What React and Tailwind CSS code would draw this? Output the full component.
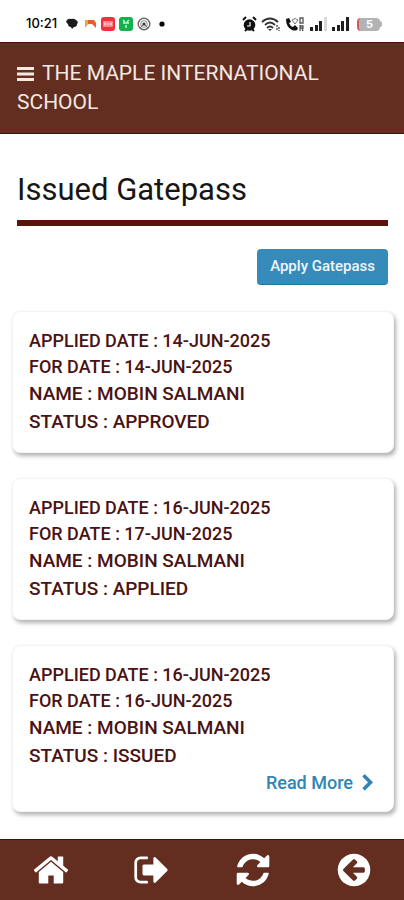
const passes = [
  { id: 1, applied: '14-JUN-2025', forDate: '14-JUN-2025', name: 'MOBIN SALMANI', status: 'APPROVED' },
  { id: 2, applied: '16-JUN-2025', forDate: '17-JUN-2025', name: 'MOBIN SALMANI', status: 'APPLIED' },
  { id: 3, applied: '16-JUN-2025', forDate: '16-JUN-2025', name: 'MOBIN SALMANI', status: 'ISSUED', more: true },
];

const navItems = [
  {
    label: 'Home',
    path: 'M1472 992v480q0 26-19 45t-45 19h-384v-384h-256v384h-384q-26 0-45-19t-19-45v-480q0-1 .5-3t.5-3l575-474 575 474q1 2 1 6zm223-69l-62 74q-8 9-21 11h-3q-13 0-21-7l-692-577-692 577q-12 8-24 7-13-2-21-11l-62-74q-8-10-7-23.5t11-21.5l719-599q32-26 76-26t76 26l244 204v-195q0-14 9-23t23-9h192q14 0 23 9t9 23v408l219 182q10 8 11 21.5t-7 23.5z',
  },
  {
    label: 'Sign out',
    path: 'M704 1440q0 4 1 20t.5 26.5-3 23.5-10 19.5-20.5 6.5h-320q-119 0-203.5-84.5t-84.5-203.5v-704q0-119 84.5-203.5t203.5-84.5h320q13 0 22.5 9.5t9.5 22.5q0 4 1 20t.5 26.5-3 23.5-10 19.5-20.5 6.5h-320q-66 0-113 47t-47 113v704q0 66 47 113t113 47h312l11.5 1 11.5 3 8 5.5 7 9 2 13.5zm928-544q0 26-19 45l-544 544q-19 19-45 19t-45-19-19-45v-288h-448q-26 0-45-19t-19-45v-384q0-26 19-45t45-19h448v-288q0-26 19-45t45-19 45 19l544 544q19 19 19 45z',
  },
  {
    label: 'Refresh',
    path: 'M1639 1056q0 5-1 7-64 268-268 434.5t-478 166.5q-146 0-282.5-55t-243.5-157l-129 129q-19 19-45 19t-45-19-19-45v-448q0-26 19-45t45-19h448q26 0 45 19t19 45-19 45l-137 137q71 66 161 102t187 36q134 0 250-65t186-179q11-17 53-117 8-23 30-23h192q13 0 22.5 9.5t9.5 22.5zm25-800v448q0 26-19 45t-45 19h-448q-26 0-45-19t-19-45 19-45l138-138q-148-137-349-137-134 0-250 65t-186 179q-11 17-53 117-8 23-30 23h-199q-13 0-22.5-9.5t-9.5-22.5v-7q65-268 270-434.5t480-166.5q146 0 284 55.5t245 156.5l130-129q19-19 45-19t45 19 19 45z',
  },
  {
    label: 'Back',
    path: 'M1408 960v-128q0-26-19-45t-45-19h-502l189-189q19-19 19-45t-19-45l-91-91q-18-18-45-18t-45 18l-362 362-91 91q-18 18-18 45t18 45l91 91 362 362q18 18 45 18t45-18l91-91q18-18 18-45t-18-45l-189-189h502q26 0 45-19t19-45zm256-64q0 209-103 385.5t-279.5 279.5-385.5 103-385.5-103-279.5-279.5-103-385.5 103-385.5 279.5-279.5 385.5-103 385.5 103 279.5 279.5 103 385.5z',
  },
];

function Icon({ path, className }) {
  return (
    <svg viewBox="0 0 1792 1792" fill="currentColor" className={className} aria-hidden="true">
      <path d={path} />
    </svg>
  );
}

function SignalBars({ weak }) {
  return (
    <svg viewBox="0 0 18 16" className="w-[18px] h-4" aria-hidden="true">
      <path d="M1 11h3v4H1zM6 9h3v6H6zM10 5h3v10h-3z" fill="#1f1f1f" />
      <path d="M15 1h3v14h-3z" fill={weak ? '#d9d9d9' : '#1f1f1f'} />
    </svg>
  );
}

function StatusBar() {
  return (
    <div className="flex h-[42px] items-center justify-between bg-white pt-1.5 pl-[26px] pr-[22px] text-black">
      <div className="flex items-center gap-1">
        <span className="mr-1 font-[Inter] text-[13px] font-medium">10:21</span>
        <svg viewBox="0 0 14 14" className="size-[14px]" aria-hidden="true">
          <path d="M2 3q2-2 4-1 3-1 5 1 3 2 1 4 0 3-3 3l-2 2-1-2Q3 10 3 7 0 5 2 3z" fill="#1c1c1c" />
        </svg>
        <svg viewBox="0 0 14 14" className="size-[14px]" aria-hidden="true">
          <path d="M2 3h4v3L2 11z" fill="#f9a13c" />
          <path d="M5 3h6l2 3v5L9 7H5z" fill="#ee5a2d" />
        </svg>
        <svg viewBox="0 0 14 14" className="size-[14px]" aria-hidden="true">
          <rect width="14" height="14" rx="3" fill="#f3313d" />
          <rect x="2" y="4" width="10" height="6" rx="1" fill="#f98c90" />
          <path d="M3 7h8" stroke="#fff" strokeWidth="1" strokeDasharray="2 1" />
        </svg>
        <svg viewBox="0 0 14 14" className="size-[14px]" aria-hidden="true">
          <rect width="14" height="14" rx="3" fill="#14b04e" />
          <path d="M4 3l2 2M10 3L8 5M4 6h6M7 8v3" stroke="#c8f3d6" strokeWidth="1.4" />
        </svg>
        <svg viewBox="0 0 14 14" className="size-[14px]" fill="none" stroke="#666" aria-hidden="true">
          <circle cx="7" cy="7" r="5.8" strokeWidth="1.4" />
          <circle cx="7" cy="7" r="3.3" stroke="#888" />
          <circle cx="7" cy="7" r="1.6" fill="#333" stroke="none" />
          <path d="M3 11l3-3M11 11L8 8" />
        </svg>
        <svg viewBox="0 0 14 14" className="size-[14px]" aria-hidden="true">
          <circle cx="7" cy="7" r="2.6" fill="#000" />
        </svg>
      </div>
      <div className="flex items-center gap-1">
        <svg viewBox="0 0 15 16" className="w-[15px] h-4" aria-hidden="true">
          <circle cx="7.5" cy="9" r="5.8" fill="#111" />
          <path d="M1 4l3-3M14 4l-3-3M3 15l2-2M12 15l-2-2" stroke="#111" strokeWidth="2" />
          <path d="M8 6v4H5" stroke="#fff" strokeWidth="1.2" fill="none" />
        </svg>
        <svg viewBox="0 0 20 16" className="w-5 h-4" fill="none" stroke="#333" aria-hidden="true">
          <path d="M1 6q8-7 16 0M4 9q5-5 10 0M6 12q3-3 6 0" strokeWidth="1.8" />
          <path d="M9 15l-2-2h4z" fill="#333" stroke="none" />
          <path d="M16 9v5M18 11v4" strokeWidth="1.2" strokeDasharray="2 1" />
        </svg>
        <svg viewBox="0 0 20 16" className="w-5 h-4" fill="none" aria-hidden="true">
          <path d="M1 3l3-1 2 4-2 1q1 3 4 4l2-2 3 3-1 2q-2 1-5 0Q1 11 1 3z" fill="#111" />
          <path d="M7 4q3-3 6 0l-3 4z" stroke="#777" />
          <path d="M15 2h3v5h-3zM15 9v6M15 10h3v2h-3M17 12l1 3" stroke="#555" strokeWidth="1.3" />
        </svg>
        <SignalBars weak />
        <SignalBars />
        <div className="ml-1 flex items-center">
          <div className="flex h-[13px] w-[23px] items-center justify-center rounded-sm border-l-2 border-[#d6575c] bg-[#b3b3b3] font-[Inter] text-[11px] leading-none font-bold text-white">
            5
          </div>
          <div className="h-1.5 w-0.5 rounded-r bg-[#b3b3b3]" />
        </div>
      </div>
    </div>
  );
}

function PassCard({ pass }) {
  return (
    <li className="rounded-lg border border-gray-100 bg-white p-4 text-[18px] leading-[26px] font-medium text-[#4a1212] shadow-[2px_3px_4px_rgba(0,0,0,0.3)]">
      <p>APPLIED DATE : {pass.applied}</p>
      <p>FOR DATE : {pass.forDate}</p>
      <p className="text-[19px] leading-[28px]">NAME : {pass.name}</p>
      <p className="text-[19px] leading-[28px]">STATUS : {pass.status}</p>
      {pass.more && (
        <a href="#details" className="flex items-center justify-end gap-1.5 leading-[25px] text-[#2f86b5]">
          Read More
          <Icon
            className="size-[18px]"
            path="M1363 877l-742 742q-19 19-45 19t-45-19l-166-166q-19-19-19-45t19-45l531-531-531-531q-19-19-19-45t19-45l166-166q19-19 45-19t45 19l742 742q19 19 19 45t-19 45z"
          />
        </a>
      )}
    </li>
  );
}

export default function App() {
  return (
    <div className="flex min-h-screen flex-col bg-white font-[Roboto,sans-serif]">
      <StatusBar />
      <header className="border-y border-[#4d0d0a] bg-[#632d20] px-[17px] py-4 text-[21px] leading-[29px] text-[#f3e9e3]">
        <button type="button" aria-label="Menu" className="mr-2 align-middle">
          <svg viewBox="0 0 17 14" className="w-[17px] h-3.5" fill="currentColor" aria-hidden="true">
            <path d="M0 0h17v3H0zM0 5.5h17v3H0zM0 11h17v3H0z" />
          </svg>
        </button>
        THE MAPLE INTERNATIONAL SCHOOL
      </header>

      <main className="flex-1 pt-9 pb-[26px]">
        <div className="mr-4 ml-[17px]">
          <h1 className="border-b-[6px] border-[#5c130c] pb-2.5 text-[31px] leading-10 text-[#161616]">Issued Gatepass</h1>
          <div className="mt-[23px] flex justify-end">
            <button type="button" className="h-9 rounded-sm border-b border-[#1c76a3] bg-[#378bba] px-[13px] text-[15px] font-medium text-[#eef6fa]">
              Apply Gatepass
            </button>
          </div>
        </div>
        <ul className="mt-[26px] mr-2.5 ml-3 space-y-[25px]">
          {passes.map((p) => (
            <PassCard key={p.id} pass={p} />
          ))}
        </ul>
      </main>

      <nav className="sticky bottom-0 flex h-[61px] items-center justify-around border-t border-[#4d0d0a] bg-[#632d20] text-white">
        {navItems.map((item) => (
          <button key={item.label} type="button" aria-label={item.label}>
            <Icon path={item.path} className="size-[38px]" />
          </button>
        ))}
      </nav>
    </div>
  );
}
